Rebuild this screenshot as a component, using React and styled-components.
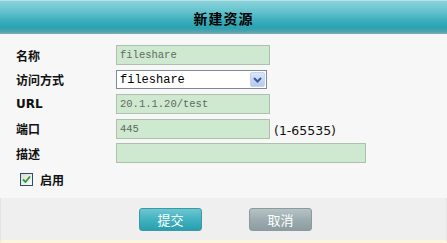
import React, { useState } from "react";
import styled, { createGlobalStyle } from "styled-components";

const GlobalStyle = createGlobalStyle`
    html, body {
        margin: 0;
        padding: 0;
        background: #f7f7f7;
    }
    body {
        font-family: "Noto Sans CJK SC", "Liberation Sans", sans-serif;
    }
`;

const Dialog = styled.div`
    width: 447px;
    height: 243px;
    display: flex;
    flex-direction: column;
    background: #f7f7f7;
    overflow: hidden;
`;

const Header = styled.div`
    height: 33px;
    flex-shrink: 0;
    display: flex;
    align-items: center;
    justify-content: center;
    border-top: 1px solid #b8e2e7;
    background: linear-gradient(
        #8ad2da 0%,
        #66c4ce 30%,
        #38adba 62%,
        #29a3b2 80%,
        #4ea2ad 92%,
        #7fb0b6 100%
    );
    font-size: 14px;
    font-weight: bold;
    color: #000;
    letter-spacing: 1px;
`;

const Body = styled.div`
    flex: 1;
    padding: 9px 0 0 16px;
    display: flex;
    flex-direction: column;
`;

const Row = styled.div`
    height: 24.5px;
    display: flex;
    align-items: center;
`;

const Label = styled.div`
    width: 100px;
    font-size: 12px;
    font-weight: bold;
    color: #111;
    font-family: ${(props) =>
        props.latin ? `"DejaVu Sans", "Liberation Sans", sans-serif` : `"Noto Sans CJK SC", sans-serif`};
`;

const Input = styled.input`
    box-sizing: border-box;
    width: ${(props) => props.width || "154px"};
    height: 20px;
    margin: 0;
    padding: 0 3px;
    border: 1px solid #acc0ad;
    background: #cfe8d0;
    font-family: "Liberation Mono", "DejaVu Sans Mono", monospace;
    font-size: 10.5px;
    color: #5d6b5f;
    outline: none;
`;

const SelectBox = styled.div`
    box-sizing: border-box;
    width: 151px;
    height: 19px;
    display: flex;
    align-items: center;
    border: 1px solid #7b8a94;
    background: #fff;
    padding-right: 1px;
`;

const Select = styled.select`
    flex: 1;
    appearance: none;
    border: none;
    background: transparent;
    outline: none;
    padding: 0 0 0 3px;
    margin: 0;
    font-family: "Liberation Mono", "DejaVu Sans Mono", monospace;
    font-size: 12px;
    color: #000;
`;

const Arrow = styled.div`
    width: 15px;
    height: 15px;
    display: flex;
    align-items: center;
    justify-content: center;
    border-radius: 2px;
    background: linear-gradient(#d8e4f8, #b7c9ee);
    border: 1px solid #c4d3f0;
    box-sizing: border-box;
`;

const Hint = styled.span`
    margin-left: 4px;
    margin-top: 4px;
    font-family: "DejaVu Sans", sans-serif;
    font-size: 12.5px;
    color: #111;
`;

const CheckRow = styled.div`
    height: 26px;
    margin-top: 1px;
    display: flex;
    align-items: center;
    padding-left: 4px;
    gap: 7px;
`;

const Check = styled.div`
    width: 13px;
    height: 13px;
    box-sizing: border-box;
    border: 1px solid #2a4f6e;
    background: linear-gradient(135deg, #dcdcd6, #fafaf7);
    display: flex;
    align-items: center;
    justify-content: center;
    cursor: pointer;
`;

const CheckText = styled.span`
    font-size: 12px;
    font-weight: bold;
    color: #111;
`;

const Footer = styled.div`
    height: 42px;
    flex-shrink: 0;
    display: flex;
    align-items: center;
    padding-left: 138px;
    gap: 47px;
    background: #efefef;
    border-left: 1px solid #e4e4e4;
    border-right: 1px solid #e4e4e4;
    border-bottom: 3px solid #fbf6dc;
`;

const Button = styled.button`
    width: 63px;
    height: 23px;
    box-sizing: border-box;
    border-radius: 3px;
    border: 1px solid ${(props) => (props.secondary ? "#8b9a9e" : "#3d98a5")};
    background: ${(props) =>
        props.secondary
            ? "linear-gradient(#b5c3c6, #9aabaf 55%, #8c9da1)"
            : "linear-gradient(#6cc7d1, #3eb0be 55%, #2a9eae)"};
    color: #fff;
    font-family: "Noto Sans CJK SC", sans-serif;
    font-size: 13px;
    padding: 0;
    cursor: pointer;
`;

const App = () => {
    const [enabled, setEnabled] = useState(true);

    return (
        <Dialog>
            <GlobalStyle />
            <Header>新建资源</Header>
            <Body>
                <Row>
                    <Label>名称</Label>
                    <Input defaultValue="fileshare" />
                </Row>
                <Row>
                    <Label>访问方式</Label>
                    <SelectBox>
                        <Select defaultValue="fileshare">
                            <option value="fileshare">fileshare</option>
                        </Select>
                        <Arrow>
                            <svg width="9" height="6" viewBox="0 0 9 6">
                                <path d="M1 1 L4.5 4.5 L8 1" fill="none" stroke="#3d5a99" strokeWidth="2" />
                            </svg>
                        </Arrow>
                    </SelectBox>
                </Row>
                <Row>
                    <Label latin>URL</Label>
                    <Input defaultValue="20.1.1.20/test" />
                </Row>
                <Row>
                    <Label>端口</Label>
                    <Input defaultValue="445" />
                    <Hint>(1-65535)</Hint>
                </Row>
                <Row>
                    <Label>描述</Label>
                    <Input width="250px" defaultValue="" />
                </Row>
                <CheckRow>
                    <Check onClick={() => setEnabled(!enabled)}>
                        {enabled && (
                            <svg width="9" height="9" viewBox="0 0 9 9">
                                <path d="M1 4.5 L3.5 7 L8 1.5" fill="none" stroke="#2f9a3a" strokeWidth="1.8" />
                            </svg>
                        )}
                    </Check>
                    <CheckText>启用</CheckText>
                </CheckRow>
            </Body>
            <Footer>
                <Button>提交</Button>
                <Button secondary>取消</Button>
            </Footer>
        </Dialog>
    );
};

export default App;
